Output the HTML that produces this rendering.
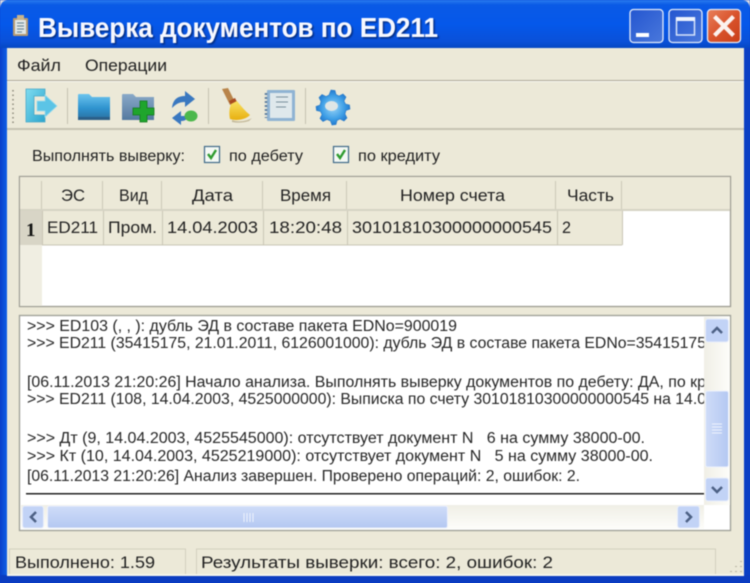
<!DOCTYPE html>
<html><head><meta charset="utf-8"><style>
html,body{margin:0;padding:0;background:#0a3fd0;width:750px;height:583px;overflow:hidden}
svg{display:block;filter:blur(.4px)}
text{font-family:"Liberation Sans","DejaVu Sans",sans-serif;font-size:16.5px;fill:#222;white-space:pre}
.o{font-size:15.500px}
.l{font-size:15.500px;fill:#262626}
.s{font-size:17px}
</style></head><body>
<svg width="750" height="583" viewBox="0 0 750 583" xmlns="http://www.w3.org/2000/svg">
<defs>
<linearGradient id="tb" x1="0" y1="0" x2="0" y2="1">
<stop offset="0" stop-color="#2a7cf0"/><stop offset=".1" stop-color="#0a5ae6"/><stop offset=".5" stop-color="#0558ea"/><stop offset=".85" stop-color="#0a50d8"/><stop offset="1" stop-color="#0546c0"/></linearGradient>
<linearGradient id="bb" x1="0" y1="0" x2="1" y2="1"><stop offset="0" stop-color="#2456d0"/><stop offset="1" stop-color="#4a78dc"/></linearGradient>
<linearGradient id="rb" x1="0" y1="0" x2="1" y2="1"><stop offset="0" stop-color="#e8805c"/><stop offset=".5" stop-color="#d9532c"/><stop offset="1" stop-color="#c83e18"/></linearGradient>
<linearGradient id="side" x1="0" y1="0" x2="1" y2="0"><stop offset="0" stop-color="#0a3fc8"/><stop offset="1" stop-color="#1060e8"/></linearGradient>
<linearGradient id="fold" x1="0" y1="0" x2="0" y2="1"><stop offset="0" stop-color="#6cc4ee"/><stop offset=".55" stop-color="#2f93cf"/><stop offset="1" stop-color="#2a6f9f"/></linearGradient>
<linearGradient id="fold2" x1="0" y1="0" x2="0" y2="1"><stop offset="0" stop-color="#8aa9c8"/><stop offset="1" stop-color="#54799f"/></linearGradient>
<linearGradient id="exit" x1="0" y1="0" x2="1" y2="1"><stop offset="0" stop-color="#7fdcf0"/><stop offset="1" stop-color="#2ba4cc"/></linearGradient>
<linearGradient id="sb" x1="0" y1="0" x2="0" y2="1"><stop offset="0" stop-color="#cfdcf8"/><stop offset="1" stop-color="#b4c8f2"/></linearGradient>
<linearGradient id="sbv" x1="0" y1="0" x2="1" y2="0"><stop offset="0" stop-color="#cfdcf8"/><stop offset="1" stop-color="#b4c8f2"/></linearGradient>
<linearGradient id="track" x1="0" y1="0" x2="1" y2="0"><stop offset="0" stop-color="#f0efe6"/><stop offset="1" stop-color="#fdfdfa"/></linearGradient>
<linearGradient id="trackh" x1="0" y1="0" x2="0" y2="1"><stop offset="0" stop-color="#f0efe6"/><stop offset="1" stop-color="#fdfdfa"/></linearGradient>
<linearGradient id="broom" x1="0" y1="0" x2="0" y2="1"><stop offset="0" stop-color="#f8e060"/><stop offset="1" stop-color="#e8b010"/></linearGradient>
<radialGradient id="gear" cx=".5" cy=".5" r=".55"><stop offset="0" stop-color="#9ad6f8"/><stop offset=".6" stop-color="#3f9fe6"/><stop offset="1" stop-color="#1a6fc8"/></radialGradient>
<clipPath id="logclip"><rect x="21" y="318" width="683" height="186"/></clipPath>
<filter id="sh" x="-5%" y="-20%" width="110%" height="150%"><feDropShadow dx="1.500" dy="1.500" stdDeviation=".7" flood-color="#06257a" flood-opacity=".9"/></filter>
</defs>

<!-- window frame -->
<rect width="750" height="583" fill="#0a3fd0"/>
<rect x="0" y="0" width="750" height="49" fill="url(#tb)"/>
<rect x="0" y="48" width="7" height="535" fill="url(#side)"/>
<rect x="744" y="48" width="6" height="535" fill="#0a3fc4"/>
<rect x="0" y="575" width="750" height="8" fill="#0b3cc0"/>
<rect x="7" y="48" width="737" height="527" fill="#ece9d8"/>
<path d="M0 0h7Q1 1 0 8z" fill="#d8d8e0"/><path d="M750 0h-7Q749 1 750 8z" fill="#d8d8e0"/>

<!-- title -->
<rect x="13" y="18" width="15" height="18" rx="1" fill="#b59a72"/>
<rect x="15" y="20" width="11" height="14" fill="#dfe6e6"/>
<rect x="17" y="15" width="7" height="5" fill="#c8b48c"/>
<path d="M17 23h7M17 26h7M17 29h7M17 32h5" stroke="#5f7f90" stroke-width="1"/>
<text x="38" y="37" textLength="400" lengthAdjust="spacingAndGlyphs" filter="url(#sh)" style="font-size:28px;font-weight:700;fill:#f6f8ff">Выверка документов по ED211</text>

<!-- window buttons -->
<rect x="630" y="9.500" width="33" height="33" rx="3.500" fill="url(#bb)" stroke="#e4ecfa" stroke-width="1.300"/>
<rect x="636" y="33" width="13" height="4" fill="#fff"/>
<rect x="669" y="9.500" width="33" height="33" rx="3.500" fill="url(#bb)" stroke="#e4ecfa" stroke-width="1.300"/>
<rect x="676.500" y="18" width="18" height="17" fill="none" stroke="#d8e4fa" stroke-width="1.500"/>
<rect x="676" y="17" width="19" height="4" fill="#eef3fd"/>
<rect x="707.500" y="9.500" width="33" height="33" rx="3.500" fill="url(#rb)" stroke="#e4ecfa" stroke-width="1.300"/>
<path d="M716 18l16 16M732 18l-16 16" stroke="#fff" stroke-width="4.200" stroke-linecap="square" opacity=".92"/>

<!-- menu -->
<text x="17" y="71" textLength="44" lengthAdjust="spacingAndGlyphs">Файл</text>
<text x="85" y="71" textLength="82" lengthAdjust="spacingAndGlyphs">Операции</text>
<rect x="7" y="80" width="737" height="1" fill="#aca899"/>
<rect x="7" y="81" width="737" height="1" fill="#f8f7f0"/>
<rect x="7" y="128" width="737" height="2" fill="#c6c3b2"/>

<!-- toolbar -->
<path d="M13 90v33" stroke="#8a8878" stroke-width="1.500" stroke-dasharray="1.500 3"/>
<path d="M26 89h19v7h-11v19h11v7h-19z" fill="url(#exit)" stroke="#4aa8c8" stroke-width=".8"/>
<path d="M37 101h8v-6l12 11-12 11v-6h-8z" fill="#5cc4e6" stroke="#9adcee" stroke-width=".8"/>
<rect x="67" y="88" width="1" height="36" fill="#c4c1b0"/>
<path d="M78 98v-3q0-1 1-1h10l3 3h18v23h-32z" fill="url(#fold)"/>
<rect x="78" y="117" width="32" height="3" fill="#2b5f88"/>
<path d="M122 98v-3q0-1 1-1h10l3 3h18v23h-32z" fill="url(#fold2)"/>
<path d="M141 105h7v7h7v7h-7v7h-7v-7h-7v-7h7z" transform="translate(-1,-4)" fill="#1fa52c" stroke="#137a1c" stroke-width=".8"/>
<path d="M172 108c1-9 6-12 13-12v-5l10 8-10 8v-5c-6 0-9 2-13 6z" fill="#3a78c0"/>
<path d="M172 117l9-7v5c3 0 4 0 7-1-1 5-3 6-7 6v4z" fill="#3a78c0" transform="translate(0,1)"/>
<ellipse cx="191" cy="116" rx="6.500" ry="5.500" fill="#4cb84c"/>
<rect x="208" y="88" width="1" height="36" fill="#c4c1b0"/>
<path d="M222 89l6-1 7 14-5 3z" fill="#b8844a"/>
<path d="M229 101l6-3 2 4-6 3z" fill="#a84a20"/>
<path d="M231 104l6-3c4 5 8 10 13 14-5 5-14 6-20 4-1-5-1-10 1-15z" fill="url(#broom)"/>
<path d="M232 120c5 2 13 2 20-2l-3 3c-6 2-12 2-17 1z" fill="#a89a70" opacity=".6"/>
<rect x="267" y="90" width="28" height="31" rx="1" fill="#8fb3d3"/>
<rect x="270" y="93" width="22" height="25" fill="#dfe8ec"/>
<path d="M266 93v25" stroke="#5f7fa0" stroke-width="2.500" stroke-dasharray="2 2"/>
<path d="M276 97h12M276 102h12M276 107h10" stroke="#7a8f9c" stroke-width="1"/>
<rect x="305" y="88" width="1" height="36" fill="#c4c1b0"/>
<path d="M331 90l4 .5 1 4 3 1.500 4-2 3 3-2 4 1.500 3 4 1 .5 4-4 1.500-1 3.500 2 4-3 3-4-2-3 1.500-1 4-4 .5-1.500-4-3.500-1.500-4 2-3-3 2-4-1.500-3-4-1-.5-4 4-1.500 1-3.500-2-4 3-3 4 2 3-1.500z" fill="url(#gear)" stroke="#2a7ac8" stroke-width=".6"/>
<ellipse cx="331.500" cy="106" rx="6.500" ry="5" fill="#dfe6e6"/>

<!-- options -->
<text class="o" x="32" y="161" textLength="153" lengthAdjust="spacingAndGlyphs">Выполнять выверку:</text>
<rect x="204.500" y="146.500" width="15" height="16" fill="#f4f8f4" stroke="#3f6a88" stroke-width="1.200"/>
<path d="M208 154l3 4 5-8" fill="none" stroke="#2f9c30" stroke-width="2.400"/>
<rect x="333.500" y="146.500" width="15" height="16" fill="#f4f8f4" stroke="#3f6a88" stroke-width="1.200"/>
<path d="M337 154l3 4 5-8" fill="none" stroke="#2f9c30" stroke-width="2.400"/>
<text class="o" x="229" y="161" textLength="74" lengthAdjust="spacingAndGlyphs">по дебету</text>
<text class="o" x="358" y="161" textLength="82" lengthAdjust="spacingAndGlyphs">по кредиту</text>

<!-- table -->
<rect x="19.500" y="176.500" width="711" height="130" fill="#fff" stroke="#9d9c92" stroke-width="1.300"/>
<rect x="20" y="177" width="710" height="34" fill="#ece9d8"/>
<rect x="20" y="209" width="710" height="2" fill="#d6d3c4"/>
<rect x="20" y="211" width="22" height="95" fill="#f0eee2"/>
<rect x="42" y="211" width="580" height="34" fill="#ece9d8"/>
<rect x="20" y="211" width="22" height="34" fill="#d8d5c6"/>
<path d="M42 245h580M622.500 211v34" stroke="#c9c6b6" stroke-width="1" fill="none"/>
<path d="M41.500 181v28M102.500 181v28M161.500 181v28M262.500 181v28M346.500 181v28M555.500 181v28M621.500 181v28" stroke="#cbc8b8" stroke-width="1"/>
<path d="M42.500 211v34M103.500 211v34M162.500 211v34M263.500 211v34M347.500 211v34M557.500 211v34" stroke="#c9c6b6" stroke-width="1"/>
<text x="61" y="201" textLength="24" lengthAdjust="spacingAndGlyphs">ЭС</text>
<text x="119" y="201" textLength="29" lengthAdjust="spacingAndGlyphs">Вид</text>
<text x="192" y="201" textLength="41" lengthAdjust="spacingAndGlyphs">Дата</text>
<text x="280" y="201" textLength="51" lengthAdjust="spacingAndGlyphs">Время</text>
<text x="400" y="201" textLength="105" lengthAdjust="spacingAndGlyphs">Номер счета</text>
<text x="567" y="201" textLength="47" lengthAdjust="spacingAndGlyphs">Часть</text>
<text x="26" y="236" style="font-family:'Liberation Serif',serif;font-weight:700;font-size:19px;fill:#111">1</text>
<text x="47" y="233" textLength="51" lengthAdjust="spacingAndGlyphs">ED211</text>
<text x="108" y="233" textLength="49" lengthAdjust="spacingAndGlyphs">Пром.</text>
<text x="167" y="233" textLength="91" lengthAdjust="spacingAndGlyphs">14.04.2003</text>
<text x="269" y="233" textLength="73" lengthAdjust="spacingAndGlyphs">18:20:48</text>
<text x="352" y="233" textLength="200" lengthAdjust="spacingAndGlyphs">30101810300000000545</text>
<text x="562" y="233" textLength="9" lengthAdjust="spacingAndGlyphs">2</text>

<!-- log -->
<rect x="19.500" y="315.500" width="711" height="215" fill="#fff" stroke="#9d9f96" stroke-width="1.300"/>
<g clip-path="url(#logclip)">
<text class="l" x="27" y="331" textLength="430" lengthAdjust="spacingAndGlyphs">&gt;&gt;&gt; ED103 (, , ): дубль ЭД в составе пакета EDNo=900019</text>
<text class="l" x="27" y="348" textLength="679" lengthAdjust="spacingAndGlyphs">&gt;&gt;&gt; ED211 (35415175, 21.01.2011, 6126001000): дубль ЭД в составе пакета EDNo=35415175</text>
<text class="l" x="27" y="387" textLength="679" lengthAdjust="spacingAndGlyphs">[06.11.2013 21:20:26] Начало анализа. Выполнять выверку документов по дебету: ДА, по кр</text>
<text class="l" x="27" y="404" textLength="679" lengthAdjust="spacingAndGlyphs">&gt;&gt;&gt; ED211 (108, 14.04.2003, 4525000000): Выписка по счету 30101810300000000545 на 14.0</text>
<text class="l" x="27" y="443" textLength="618" lengthAdjust="spacingAndGlyphs">&gt;&gt;&gt; Дт (9, 14.04.2003, 4525545000): отсутствует документ N   6 на сумму 38000-00.</text>
<text class="l" x="27" y="461" textLength="626" lengthAdjust="spacingAndGlyphs">&gt;&gt;&gt; Кт (10, 14.04.2003, 4525219000): отсутствует документ N   5 на сумму 38000-00.</text>
<text class="l" x="27" y="481" textLength="553" lengthAdjust="spacingAndGlyphs">[06.11.2013 21:20:26] Анализ завершен. Проверено операций: 2, ошибок: 2.</text>
<rect x="26" y="493" width="678" height="1.500" fill="#222"/>
</g>

<!-- scrollbars -->
<rect x="704" y="317" width="26" height="188" fill="url(#track)"/>
<rect x="705.500" y="319" width="23" height="23" rx="2.500" fill="#c2d3f6" stroke="#e8eefb"/>
<path d="M712 333l5-5 5 5" fill="none" stroke="#4d6185" stroke-width="2.500"/>
<rect x="705.500" y="391" width="23" height="76" rx="2" fill="url(#sbv)" stroke="#eef2fc"/>
<path d="M712 424h10M712 427h10M712 430h10M712 433h10" stroke="#eef3fd" stroke-width="1"/>
<rect x="705.500" y="478" width="23" height="23" rx="2.500" fill="#c2d3f6" stroke="#e8eefb"/>
<path d="M712 487l5 5 5-5" fill="none" stroke="#4d6185" stroke-width="2.500"/>
<rect x="21" y="505" width="683" height="24" fill="url(#trackh)"/>
<rect x="22.500" y="506" width="21" height="22" rx="2.500" fill="#c2d3f6" stroke="#e8eefb"/>
<path d="M36 512l-5 5 5 5" fill="none" stroke="#4d6185" stroke-width="2.500"/>
<rect x="47.500" y="506" width="400" height="22" rx="2" fill="url(#sb)" stroke="#eef2fc"/>
<path d="M244 513v9M247 513v9M250 513v9M253 513v9" stroke="#eef3fd" stroke-width="1"/>
<rect x="677.500" y="506" width="22" height="22" rx="2.500" fill="#c2d3f6" stroke="#e8eefb"/>
<path d="M686 512l5 5-5 5" fill="none" stroke="#4d6185" stroke-width="2.500"/>

<!-- status -->
<path d="M9.500 575v-26h176v26M196.500 575v-26h519v26" fill="none" stroke="#d3d0bf" stroke-width="1"/>
<rect x="7" y="574" width="737" height="2" fill="#f5f4ea"/>
<text class="s" x="15" y="568" textLength="140" lengthAdjust="spacingAndGlyphs">Выполнено: 1.59</text>
<text class="s" x="201" y="568" textLength="352" lengthAdjust="spacingAndGlyphs">Результаты выверки: всего: 2, ошибок: 2</text>
<path d="M741 561v1M736 566v1M741 566v1M731 571v1M736 571v1M741 571v1" stroke="#b8b5a4" stroke-width="2"/>
</svg>
</body></html>
